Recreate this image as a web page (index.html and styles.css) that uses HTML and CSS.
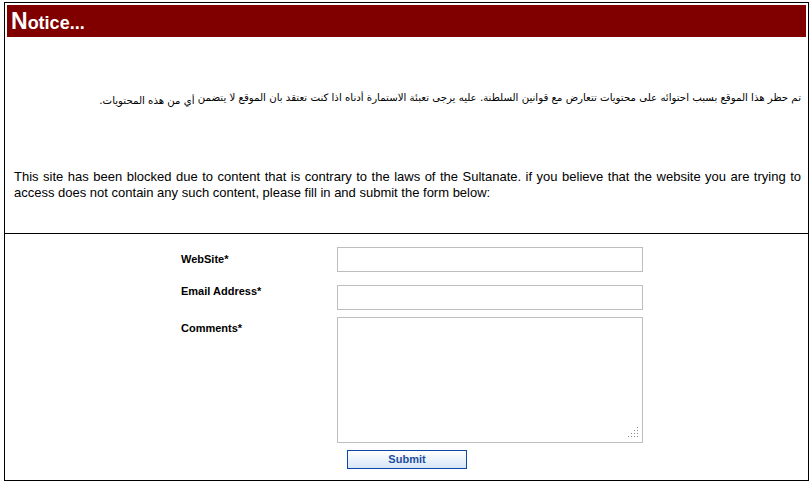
FILE: index.html
```html
<!DOCTYPE html>
<html>
<head>
<meta charset="utf-8">
<title>Notice</title>
<link rel="stylesheet" href="styles.css">
</head>
<body>
<div class="frame">
  <div class="top">
    <div class="header"><span class="cap">N</span>otice...</div>
    <p class="arabic" dir="rtl">تم حظر هذا الموقع بسبب احتوائه على محتويات تتعارض مع قوانين السلطنة. عليه يرجى تعبئة الاستمارة أدناه اذا كنت تعتقد بان الموقع لا يتضمن <span class="low">أي من هذه المحتويات.</span></p>
    <p class="english">This site has been blocked due to content that is contrary to the laws of the Sultanate. if you believe that the website you are trying to access does not contain any such content, please fill in and submit the form below:</p>
  </div>
  <div class="bottom">
    <form class="form">
      <label class="lbl lbl-site">WebSite*</label>
      <input class="field" type="text">
      <label class="lbl lbl-email">Email Address*</label>
      <input class="field" type="text">
      <label class="lbl lbl-comments">Comments*</label>
      <div class="area-wrap">
        <textarea class="area"></textarea>
        <svg class="grip" width="10" height="10" viewBox="0 0 10 10">
          <g fill="#8a8a8a">
            <rect x="9" y="0" width="1" height="1"/>
            <rect x="9" y="3" width="1" height="1"/>
            <rect x="9" y="6" width="1" height="1"/>
            <rect x="9" y="9" width="1" height="1"/>
            <rect x="6" y="3" width="1" height="1"/>
            <rect x="6" y="6" width="1" height="1"/>
            <rect x="6" y="9" width="1" height="1"/>
            <rect x="3" y="6" width="1" height="1"/>
            <rect x="3" y="9" width="1" height="1"/>
            <rect x="0" y="9" width="1" height="1"/>
          </g>
        </svg>
      </div>
      <span class="spacer"></span>
      <div class="btn-row"><button class="submit" type="button">Submit</button></div>
    </form>
  </div>
</div>
</body>
</html>
```
FILE: styles.css
```css
html, body {
  margin: 0;
  padding: 0;
  background: #fff;
}
body {
  font-family: "Liberation Sans", Arial, sans-serif;
  color: #000;
}
.frame {
  box-sizing: border-box;
  width: 805px;
  height: 479px;
  margin: 2px 0 0 4px;
  border: 1px solid #000;
  display: flex;
  flex-direction: column;
}
.top {
  height: 230px;
  padding: 2px 2px 0 2px;
  box-sizing: border-box;
}
.header {
  height: 32px;
  background: #800000;
  color: #fff;
  font-weight: bold;
  font-size: 18px;
  line-height: 33px;
  padding-left: 4px;
  overflow: hidden;
}
.cap {
  font-size: 23px;
}
.arabic {
  margin: 0;
  padding: 54px 5px 0 7px;
  font-family: "DejaVu Sans", "Liberation Sans", sans-serif;
  font-size: 10.2px;
  line-height: 14px;
}
.low {
  vertical-align: -3px;
}
.english {
  margin: 0;
  padding: 61px 5px 0 7px;
  font-size: 13px;
  line-height: 16px;
  text-align: justify;
}
.bottom {
  flex: 1;
  border-top: 1px solid #000;
  padding-top: 13px;
}
.form {
  display: grid;
  grid-template-columns: 156px 306px;
  margin: 0 0 0 176px;
}
.lbl {
  font-size: 11px;
  font-weight: bold;
  line-height: 13px;
  align-self: start;
}
.lbl-site {
  padding-top: 6px;
}
.lbl-email {
  padding-top: 0;
}
.lbl-comments {
  padding-top: 5px;
}
.field {
  box-sizing: border-box;
  width: 306px;
  height: 25px;
  margin: 0 0 13px 0;
  border: 1px solid #bdbdbd;
  padding: 0 3px;
  background: #fff;
  outline: none;
}
.field:nth-of-type(2) {
  margin-bottom: 7px;
}
.area-wrap {
  position: relative;
  width: 306px;
  height: 126px;
}
.area {
  box-sizing: border-box;
  display: block;
  width: 306px;
  height: 126px;
  margin: 0;
  border: 1px solid #bdbdbd;
  resize: none;
  background: #fff;
  outline: none;
}
.grip {
  position: absolute;
  right: 5px;
  bottom: 6px;
}
.btn-row {
  padding: 7px 0 0 10px;
}
.submit {
  box-sizing: border-box;
  display: block;
  width: 120px;
  height: 19px;
  margin: 0;
  padding: 0;
  border: 1px solid #0a47a8;
  background: linear-gradient(#ffffff, #d7e6f8);
  color: #1b4fa0;
  font-family: "Liberation Sans", Arial, sans-serif;
  font-size: 11px;
  font-weight: bold;
  line-height: 17px;
}
```
